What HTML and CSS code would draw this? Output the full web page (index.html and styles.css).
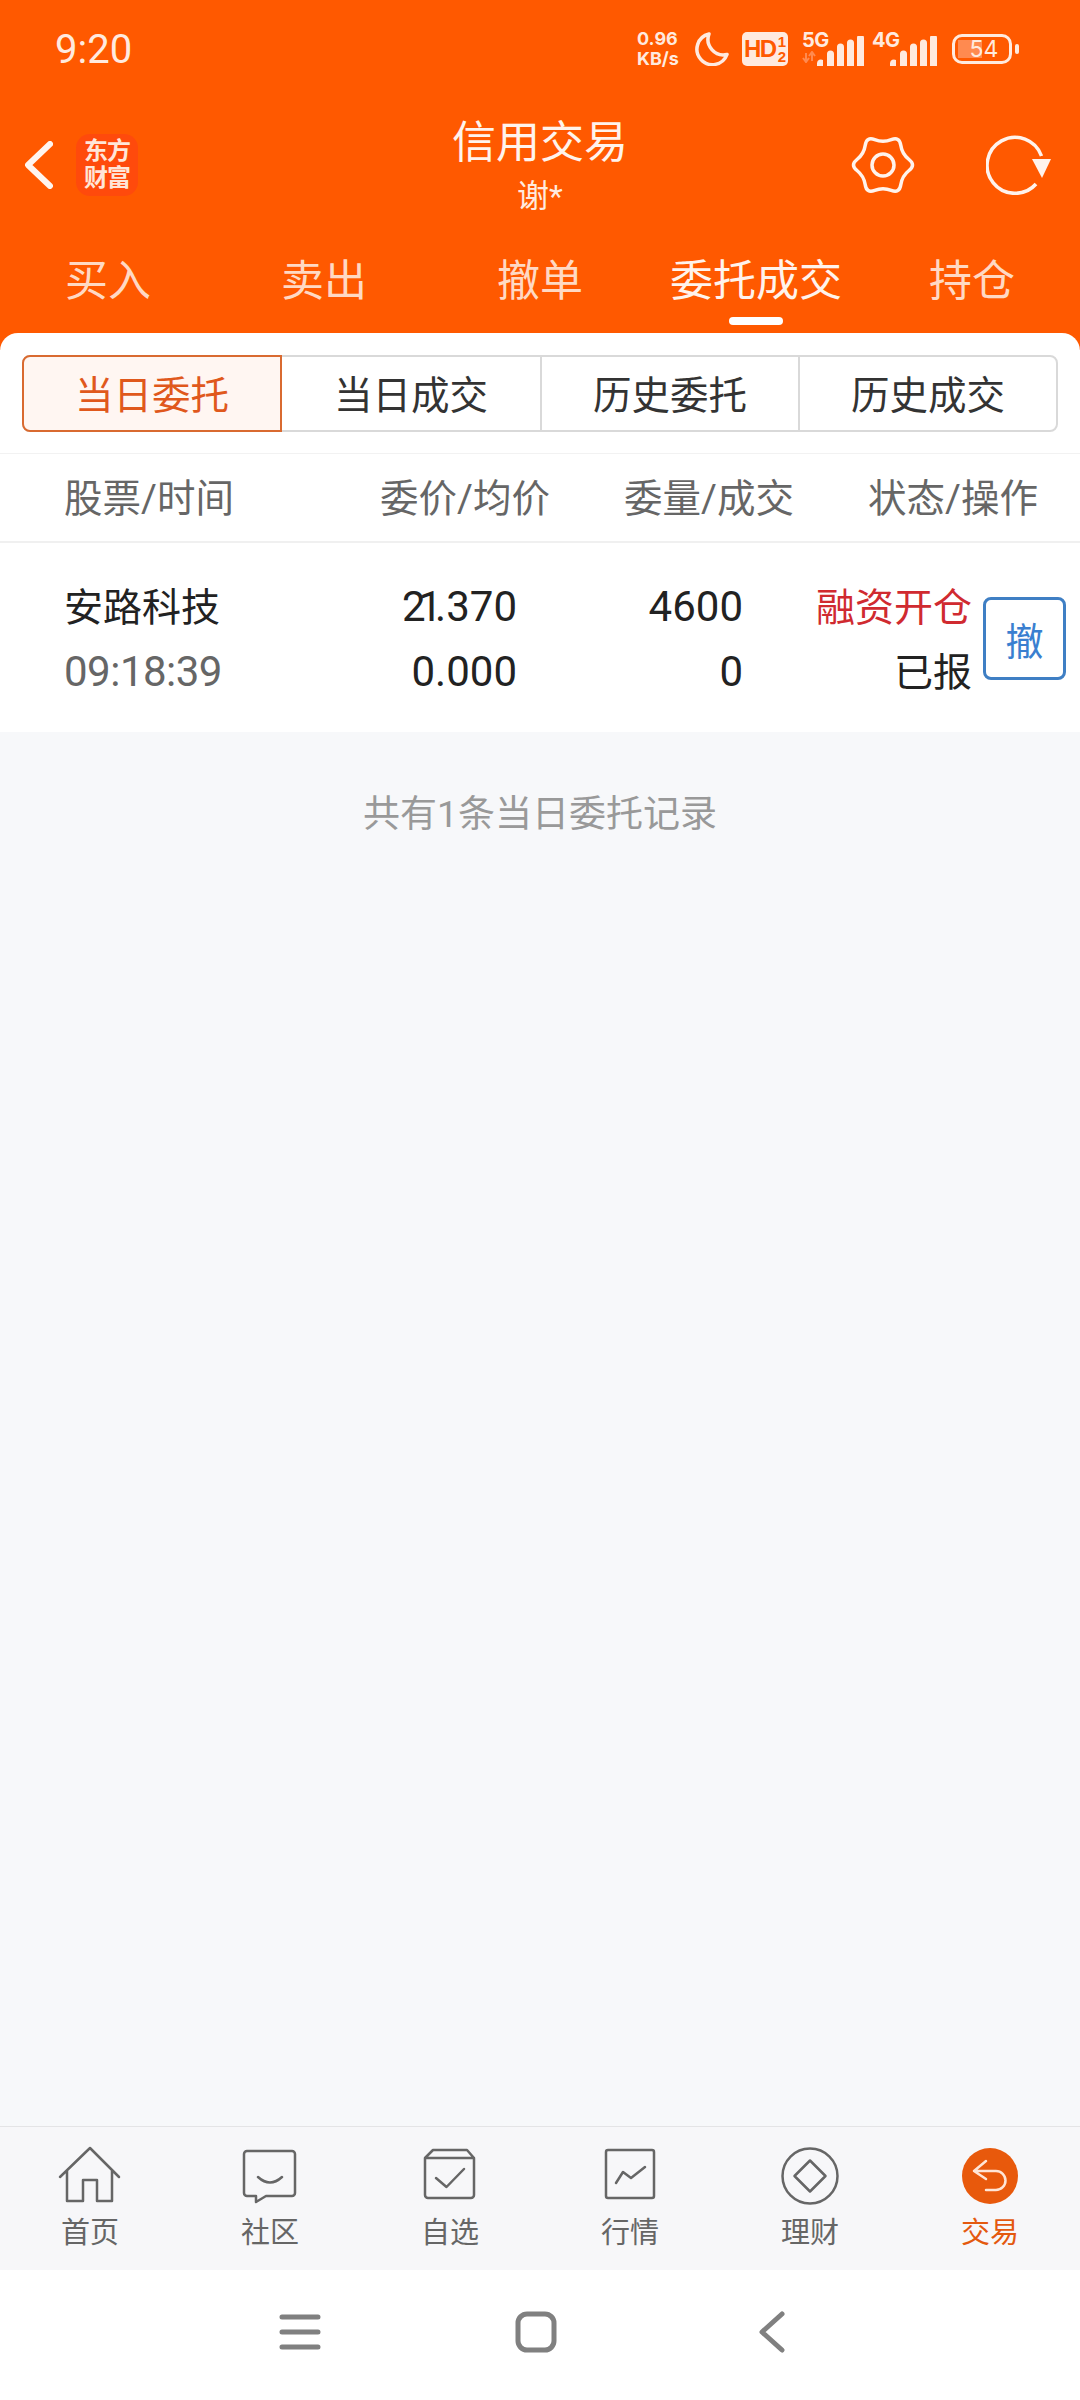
FILE: index.html
```html
<!DOCTYPE html>
<html lang="zh-CN">
<head>
  <meta charset="UTF-8" />
  <title>信用交易</title>
  <link rel="stylesheet" href="styles.css">
</head>
<body>
  <header class="top">
    <div class="statusbar">
      <span class="clock">9:20</span>
      <div class="status-icons">
        <div class="speed"><span>0.96</span><span>KB/s</span></div>
        <svg class="moon" viewBox="0 0 34 34"><path d="M14 2A15.500 15.500 0 1 0 32 22.500A15.500 15.500 0 0 1 14 2Z" /></svg>
        <div class="hd"><span class="hd-text">HD</span><span class="hd-sim"><span>1</span><span>2</span></span></div>
        <div class="signal">
          <div class="net">
            <span>5G</span>
            <svg class="arrows" viewBox="0 0 14 12"><path d="M4 11V2M1 7l3 4 3-4M10 1v9M7 5l3-4 3 4" /></svg>
          </div>
          <svg class="bars" viewBox="0 0 47 30"><path d="M0 30v-3a4 4 0 0 1 6-3v6zM10 30V18a3.500 3.500 0 0 1 7 0v12zM20 30V11a3.500 3.500 0 0 1 7 0v19zM30 30V7a3.500 3.500 0 0 1 7 0v23zM40 30V2a3.500 3.500 0 0 1 7 0v28z" /></svg>
        </div>
        <div class="signal lte">
          <div class="net"><span>4G</span></div>
          <svg class="bars" viewBox="0 0 47 30"><path d="M0 30v-3a4 4 0 0 1 6-3v6zM10 30V18a3.500 3.500 0 0 1 7 0v12zM20 30V11a3.500 3.500 0 0 1 7 0v19zM30 30V7a3.500 3.500 0 0 1 7 0v23zM40 30V2a3.500 3.500 0 0 1 7 0v28z" /></svg>
        </div>
        <div class="battery"><span>54</span></div>
        <i class="battery-nub"></i>
      </div>
    </div>

    <div class="appbar">
      <div class="appbar-left">
        <svg class="back" viewBox="0 0 28 48"><path d="M25 3L3 24l22 21" /></svg>
        <div class="logo"><span>东方</span><span>财富</span></div>
      </div>
      <div class="title">
        <h1>信用交易</h1>
        <div class="account">谢*</div>
      </div>
      <div class="appbar-right">
        <svg class="gear" viewBox="0 0 64 64">
          <path d="M58.030 26.500Q51.050 21 49.780 12.210Q48.500 3.420 40.250 6.710Q32 10 23.750 6.710Q15.500 3.420 14.230 12.210Q12.950 21 5.980 26.500Q-1 32 5.980 37.500Q12.950 43 14.230 51.790Q15.500 60.580 23.750 57.290Q32 54 40.250 57.290Q48.500 60.580 49.780 51.790Q51.050 43 58.030 37.500Q65 32 58.030 26.500Z" />
          <circle cx="32" cy="32" r="11" />
        </svg>
        <svg class="refresh" viewBox="0 0 66 60">
          <path d="M55.500 21A28 28 0 1 0 50 49" />
          <polygon points="46,24 65,24 56,43" />
        </svg>
      </div>
    </div>

    <nav class="tabs">
      <a class="tab">买入</a>
      <a class="tab">卖出</a>
      <a class="tab">撤单</a>
      <a class="tab active">委托成交</a>
      <a class="tab">持仓</a>
    </nav>
  </header>

  <main class="content">
    <div class="panel">
      <div class="segments">
        <div class="segment active">当日委托</div>
        <div class="segment">当日成交</div>
        <div class="segment">历史委托</div>
        <div class="segment">历史成交</div>
      </div>

      <div class="table-head">
        <span>股票/时间</span>
        <span>委价/均价</span>
        <span>委量/成交</span>
        <span>状态/操作</span>
      </div>

      <div class="order">
        <span class="name cjk">安路科技</span>
        <span class="cell"><span class="kern">21</span>.370</span>
        <span class="cell">4600</span>
        <span class="cell cjk red">融资开仓</span>
        <button class="cancel-btn">撤</button>
        <span class="time">09:18:39</span>
        <span class="cell">0.000</span>
        <span class="cell">0</span>
        <span class="cell cjk">已报</span>
      </div>
    </div>
    <div class="records">共有1条当日委托记录</div>
  </main>

  <footer class="tabbar">
    <a class="bar-item">
      <svg viewBox="0 0 64 60"><path d="M2 31L32 2l29 29M9 25v30h16V34h14v21h15V25" /></svg>
      <span>首页</span>
    </a>
    <a class="bar-item">
      <svg viewBox="0 0 64 60"><path d="M9 5h45a3 3 0 0 1 3 3v39a3 3 0 0 1-3 3H28L18 56v-6H9a3 3 0 0 1-3-3V8a3 3 0 0 1 3-3zM20 31Q32 42 44 31" /></svg>
      <span>社区</span>
    </a>
    <a class="bar-item">
      <svg viewBox="0 0 64 60"><path d="M7 12v37a3 3 0 0 0 3 3h43a3 3 0 0 0 3-3V12zM7 12l8-8h34l7 8M18 32l10.500 9L46 23" /></svg>
      <span>自选</span>
    </a>
    <a class="bar-item">
      <svg viewBox="0 0 64 60"><rect x="8" y="4" width="48" height="48" rx="2" /><path d="M18 37l7-11 8 6 14-11" /></svg>
      <span>行情</span>
    </a>
    <a class="bar-item">
      <svg viewBox="0 0 64 60"><circle cx="32" cy="30" r="27.500" /><path d="M32 14.500L47.500 30 32 45.500 16.500 30z" /></svg>
      <span>理财</span>
    </a>
    <a class="bar-item active">
      <svg viewBox="0 0 64 60"><circle class="dot" cx="32" cy="30" r="28" /><path class="undo" d="M28 15L16 25l12 8M16 25h22a9.500 9.500 0 0 1 0 19H28" /></svg>
      <span>交易</span>
    </a>
  </footer>

  <div class="navbar">
    <svg viewBox="0 0 60 60"><path d="M12 15h36M12 30h36M12 45h36" /></svg>
    <svg viewBox="0 0 60 60"><rect x="12" y="12" width="36" height="36" rx="9" /></svg>
    <svg viewBox="0 0 60 60"><path d="M40 12L20 30l20 18" /></svg>
  </div>
</body>
</html>
```

FILE: styles.css
```css
* {
  box-sizing: border-box;
}
body {
  margin: 0;
  width: 1080px;
  height: 2400px;
  display: flex;
  flex-direction: column;
  font-family: Roboto, "Noto Sans CJK SC", sans-serif;
  background-color: #f7f8fa;
  color: #222;
}

/* orange header */
.top {
  background-color: #ff5900;
  color: white;
  height: 350px;
  flex-shrink: 0;
}
.statusbar {
  height: 98px;
  padding: 0 61px 0 55px;
  display: flex;
  justify-content: space-between;
  align-items: center;
}
.clock {
  font-size: 40px;
  color: #ffeadf;
}
.status-icons {
  display: flex;
  align-items: center;
  color: #ffeadf;
  font-family: Inter, sans-serif;
}
.speed {
  width: 47px;
  display: flex;
  flex-direction: column;
  font-size: 18px;
  font-weight: 700;
  line-height: 20px;
  white-space: nowrap;
}
.moon {
  width: 34px;
  height: 34px;
  margin-left: 11px;
  fill: none;
  stroke: #ffeadf;
  stroke-width: 3.500;
  stroke-linejoin: round;
}
.hd {
  width: 46px;
  height: 34px;
  margin-left: 13px;
  background-color: #ffeadf;
  border-radius: 5px;
  color: #ff5900;
  display: flex;
  align-items: center;
  justify-content: center;
  font-family: "Liberation Sans", sans-serif;
  font-weight: 700;
}
.hd-text {
  font-size: 24px;
  letter-spacing: -1.500px;
}
.hd-sim {
  display: flex;
  flex-direction: column;
  font-size: 15px;
  line-height: 15px;
  margin-left: 2px;
}
.signal {
  display: flex;
  align-items: flex-end;
  height: 34px;
  margin-left: 12px;
  width: 66px;
}
.signal.lte {
  margin-left: 6px;
  width: 65px;
}
.net {
  width: 29px;
  flex-shrink: 0;
  align-self: flex-start;
  font-size: 20px;
  font-weight: 700;
  line-height: 18px;
  letter-spacing: -0.5px;
  margin-left: 2px;
  margin-top: -1px;
}
.lte .net {
  margin-left: 0;
}
.arrows {
  display: block;
  width: 14px;
  height: 12px;
  margin-top: 2px;
  fill: none;
  stroke: #ff8a50;
  stroke-width: 2;
}
.bars {
  width: 47px;
  height: 30px;
  flex-shrink: 0;
  margin-left: -14px;
  fill: #ffeadf;
}
.lte .bars {
  margin-left: -11px;
}
.battery {
  width: 60px;
  height: 30px;
  margin-left: 15px;
  border: 3px solid #ffeadf;
  border-radius: 10px;
  background: linear-gradient(90deg, #ff8a50 0, #ff8a50 24px, transparent 24px) 3px 3px / 100% 18px no-repeat;
  display: flex;
  align-items: center;
  justify-content: center;
  font-size: 23px;
  font-weight: 400;
  padding-left: 4px;
}
.battery-nub {
  width: 4px;
  height: 10px;
  margin-left: 3px;
  background-color: #ffeadf;
  border-radius: 2px;
}

.appbar {
  height: 134px;
  display: grid;
  grid-template-columns: 1fr auto 1fr;
  align-items: center;
}
.appbar-left {
  display: flex;
  align-items: center;
  padding-left: 25px;
}
.back {
  width: 28px;
  height: 48px;
  fill: none;
  stroke: #fff5ef;
  stroke-width: 6;
  stroke-linecap: round;
  stroke-linejoin: round;
}
.logo {
  width: 62px;
  height: 62px;
  margin-left: 23px;
  border-radius: 14px;
  background-color: #ff4a0c;
  color: #ffe6d8;
  display: flex;
  flex-direction: column;
  align-items: center;
  justify-content: center;
  font-size: 24px;
  line-height: 27px;
  font-weight: 700;
  letter-spacing: -1px;
}
.title {
  text-align: center;
  padding-top: 3px;
}
.title h1 {
  margin: 0 0 7px;
  font-size: 44px;
  line-height: 52px;
  font-weight: 400;
  color: #fff3ec;
}
.account {
  font-size: 32px;
  line-height: 40px;
  color: #ffeadf;
}
.appbar-right {
  display: flex;
  justify-content: flex-end;
  align-items: center;
  gap: 71px;
  padding-right: 28px;
}
.gear {
  width: 64px;
  height: 64px;
  fill: none;
  stroke: #fff3ec;
  stroke-width: 3.500;
}
.refresh {
  width: 66px;
  height: 60px;
  fill: none;
  stroke: #fff3ec;
  stroke-width: 3.500;
}
.refresh polygon {
  fill: #fff3ec;
  stroke: none;
}

.tabs {
  display: grid;
  grid-template-columns: repeat(5, 216px);
}
.tab {
  padding-top: 27px;
  text-align: center;
  font-size: 43px;
  line-height: 44px;
  color: #ffd9c4;
}
.tab.active {
  color: #fff3ec;
}
.tab.active::after {
  content: "";
  display: block;
  width: 54px;
  height: 8px;
  margin: 14px auto 0;
  border-radius: 4px;
  background-color: white;
}

/* content */
.content {
  flex: 1;
  margin-top: -17px;
}
.panel {
  background-color: white;
  border-radius: 18px 18px 0 0;
  padding-top: 22px;
}
.segments {
  display: grid;
  grid-template-columns: repeat(4, 1fr);
  height: 77px;
  margin: 0 22px 21px;
  border: 2px solid #d9d9d9;
  border-radius: 8px;
}
.segment {
  display: flex;
  align-items: center;
  justify-content: center;
  padding-bottom: 3px;
  font-size: 38.500px;
  color: #333;
  border-left: 2px solid #d9d9d9;
}
.segment.active {
  margin: -2px 0 -2px -2px;
  border: 2px solid #d96a30;
  border-radius: 8px 0 0 8px;
  background-color: #fff6f2;
  color: #e0581c;
}
.segment.active + .segment {
  border-left: none;
}
.table-head {
  height: 90px;
  padding: 0 0 5px 64px;
  display: grid;
  grid-template-columns: 316px 244px 244px auto;
  align-items: center;
  font-size: 38.500px;
  color: #666;
  border-top: 1px solid #f2f2f2;
  border-bottom: 2px solid #f0f0f0;
}
.order {
  height: 189px;
  padding: 30px 0 0 64px;
  display: grid;
  grid-template-columns: 238px 215px 226px 229px 94px;
  grid-template-rows: 65px 65px;
  align-items: center;
}
.cell {
  text-align: right;
  font-size: 42px;
  margin-top: 2px;
}
.kern {
  letter-spacing: -7px;
}
.time {
  color: #666;
  font-size: 42px;
  letter-spacing: -0.500px;
  margin-top: 2px;
}
.cjk {
  font-size: 39px;
  margin: 0 0 4px;
}
.cell.red {
  color: #d02a30;
}
.cancel-btn {
  grid-column: 5;
  grid-row: 1 / 3;
  justify-self: end;
  width: 83px;
  height: 83px;
  padding: 0;
  background-color: white;
  border: 3px solid #3f7fc4;
  border-radius: 8px;
  color: #3a7fd0;
  font-family: inherit;
  font-size: 38px;
}
.records {
  padding-top: 63px;
  text-align: center;
  font-size: 37px;
  line-height: 40px;
  color: #999;
}

/* bottom bars */
.tabbar {
  height: 144px;
  padding-top: 19px;
  display: grid;
  grid-template-columns: repeat(6, 180px);
  background-color: #f7f7f9;
  border-top: 1px solid #e4e4e6;
}
.bar-item {
  display: flex;
  flex-direction: column;
  align-items: center;
  font-size: 29px;
  line-height: 34px;
  color: #666;
}
.bar-item svg {
  width: 64px;
  height: 60px;
  margin-bottom: 10px;
  fill: none;
  stroke: #666;
  stroke-width: 2.500;
  stroke-linecap: round;
  stroke-linejoin: round;
}
.bar-item.active {
  color: #e4590f;
}
.bar-item .dot {
  fill: #e8590c;
  stroke: none;
}
.bar-item .undo {
  stroke: #ffe5d6;
}
.navbar {
  height: 130px;
  flex-shrink: 0;
  background-color: white;
  display: flex;
  justify-content: center;
  align-items: center;
  gap: 176px;
  padding: 0 8px 6px 0;
}
.navbar svg {
  width: 60px;
  height: 60px;
  fill: none;
  stroke: #808080;
  stroke-width: 5;
  stroke-linecap: round;
  stroke-linejoin: round;
}
```
